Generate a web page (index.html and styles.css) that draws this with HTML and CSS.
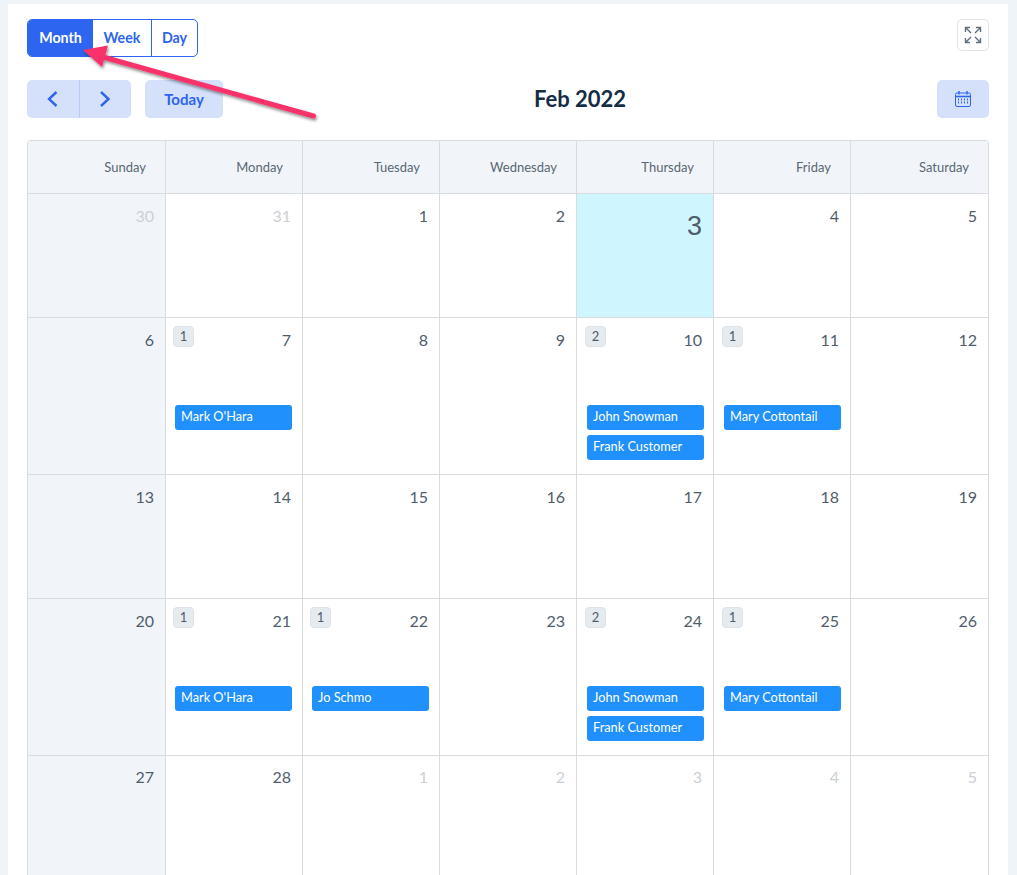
FILE: index.html
```html
<!DOCTYPE html>
<html>
    <head>
        <meta charset="utf-8">
        <title>Calendar</title>
        <link rel="stylesheet" href="styles.css">
    </head>
    <body>
        <div class="panel">
            <div class="top-row">
                <div class="views">
                    <div class="view active">Month</div>
                    <div class="view">Week</div>
                    <div class="view">Day</div>
                </div>
                <div class="expand">
                    <svg width="18" height="18" viewBox="0 0 18 18" fill="none" stroke="#5f6f7e" stroke-width="1.4">
                        <path d="M1.5 6V1.5H6M1.5 1.5L7 7"/>
                        <path d="M12 1.5h4.5V6M16.5 1.5L11 7"/>
                        <path d="M1.5 12v4.5H6M1.5 16.5L7 11"/>
                        <path d="M12 16.5h4.5V12M16.5 16.5L11 11"/>
                    </svg>
                </div>
            </div>
            <div class="nav-row">
                <div class="nav-left">
                    <div class="pager">
                        <div class="page-btn">
                            <svg width="12" height="18" viewBox="0 0 12 18" fill="none" stroke="#2d64f0" stroke-width="2.4"><path d="M9.5 2L2 9l7.5 7"/></svg>
                        </div>
                        <div class="page-btn">
                            <svg width="12" height="18" viewBox="0 0 12 18" fill="none" stroke="#2d64f0" stroke-width="2.4"><path d="M2 2l7.5 7L2 16"/></svg>
                        </div>
                    </div>
                    <div class="today">Today</div>
                </div>
                <div class="month-title">Feb 2022</div>
                <div class="pick">
                    <svg width="16" height="16" viewBox="0 0 16 16" fill="none" stroke="#2d64f0" stroke-width="1">
                        <rect x="0.5" y="2" width="15" height="13.5" rx="1.5"/>
                        <path d="M0.5 5.5h15" stroke-width="1.6"/>
                        <path d="M4 0v3.5M12 0v3.5" stroke-width="1.4"/>
                        <path d="M3.5 7.5v6M6.5 7.5v6M9.5 7.5v6M12.5 7.5v6" stroke-dasharray="2 1"/>
                    </svg>
                </div>
            </div>
            <div class="calendar">
                <div class="head">Sunday</div>
                <div class="head">Monday</div>
                <div class="head">Tuesday</div>
                <div class="head">Wednesday</div>
                <div class="head">Thursday</div>
                <div class="head">Friday</div>
                <div class="head">Saturday</div>

                <div class="day weekend short"><div class="num faded">30</div></div>
                <div class="day short"><div class="num faded">31</div></div>
                <div class="day short"><div class="num">1</div></div>
                <div class="day short"><div class="num">2</div></div>
                <div class="day short now"><div class="num big">3</div></div>
                <div class="day short"><div class="num">4</div></div>
                <div class="day short"><div class="num">5</div></div>

                <div class="day weekend tall"><div class="num">6</div></div>
                <div class="day tall">
                    <span class="count">1</span>
                    <div class="num">7</div>
                    <div class="events"><div class="event">Mark O'Hara</div></div>
                </div>
                <div class="day tall"><div class="num">8</div></div>
                <div class="day tall"><div class="num">9</div></div>
                <div class="day tall">
                    <span class="count">2</span>
                    <div class="num">10</div>
                    <div class="events">
                        <div class="event">John Snowman</div>
                        <div class="event">Frank Customer</div>
                    </div>
                </div>
                <div class="day tall">
                    <span class="count">1</span>
                    <div class="num">11</div>
                    <div class="events"><div class="event">Mary Cottontail</div></div>
                </div>
                <div class="day tall"><div class="num">12</div></div>

                <div class="day weekend short"><div class="num">13</div></div>
                <div class="day short"><div class="num">14</div></div>
                <div class="day short"><div class="num">15</div></div>
                <div class="day short"><div class="num">16</div></div>
                <div class="day short"><div class="num">17</div></div>
                <div class="day short"><div class="num">18</div></div>
                <div class="day short"><div class="num">19</div></div>

                <div class="day weekend tall"><div class="num">20</div></div>
                <div class="day tall">
                    <span class="count">1</span>
                    <div class="num">21</div>
                    <div class="events"><div class="event">Mark O'Hara</div></div>
                </div>
                <div class="day tall">
                    <span class="count">1</span>
                    <div class="num">22</div>
                    <div class="events"><div class="event">Jo Schmo</div></div>
                </div>
                <div class="day tall"><div class="num">23</div></div>
                <div class="day tall">
                    <span class="count">2</span>
                    <div class="num">24</div>
                    <div class="events">
                        <div class="event">John Snowman</div>
                        <div class="event">Frank Customer</div>
                    </div>
                </div>
                <div class="day tall">
                    <span class="count">1</span>
                    <div class="num">25</div>
                    <div class="events"><div class="event">Mary Cottontail</div></div>
                </div>
                <div class="day tall"><div class="num">26</div></div>

                <div class="day weekend tall last"><div class="num">27</div></div>
                <div class="day tall last"><div class="num">28</div></div>
                <div class="day tall last"><div class="num faded">1</div></div>
                <div class="day tall last"><div class="num faded">2</div></div>
                <div class="day tall last"><div class="num faded">3</div></div>
                <div class="day tall last"><div class="num faded">4</div></div>
                <div class="day tall last"><div class="num faded">5</div></div>
            </div>
        </div>
        <!-- annotation drawn over the screenshot -->
        <svg class="arrow" width="340" height="140" viewBox="0 0 340 140">
            <defs>
                <filter id="sombra" x="-10%" y="-20%" width="120%" height="150%">
                    <feDropShadow dx="1" dy="2" stdDeviation="1.5" flood-color="#000" flood-opacity="0.45"/>
                </filter>
            </defs>
            <g filter="url(#sombra)">
                <path d="M313.5 116L96 55" stroke="#f9326c" stroke-width="5" stroke-linecap="round" fill="none"/>
                <path d="M83 50L108 45.5L102 67Z" fill="#f9326c"/>
            </g>
        </svg>
    </body>
</html>
```

FILE: styles.css
```css
html, body{
    margin: 0;
    height: 875px;
    overflow: hidden;
}
body{
    background-color: #eff4f9;
    font-family: 'Lato', sans-serif;
    color: #4f5d6b;
    position: relative;
}
.panel{
    background-color: white;
    margin: 4px 9px 0 8px;
    padding: 15px 19px 0 19px;
    height: 871px;
    box-sizing: border-box;
}
.top-row{
    display: flex;
    justify-content: space-between;
    height: 38px;
}
.views{
    display: flex;
    height: 38px;
    box-sizing: border-box;
    border: 1px solid #2d64f0;
    border-radius: 5px;
    overflow: hidden;
}
.view{
    display: flex;
    align-items: center;
    justify-content: center;
    color: #2d64f0;
    font-size: 14.25px;
    font-weight: 700;
    padding-bottom: 1px;
    box-sizing: border-box;
    width: 58px;
    border-left: 1px solid #2d64f0;
}
.view:nth-child(2){
    border-left: none;
}
.view:nth-child(3){
    width: 46px;
}
.view.active{
    background-color: #2d64f0;
    color: white;
    width: 65px;
    border-left: none;
}
.expand{
    width: 32px;
    height: 32px;
    box-sizing: border-box;
    border: 1px solid #dfe3e8;
    border-radius: 5px;
    display: flex;
    align-items: center;
    justify-content: center;
}
.nav-row{
    display: flex;
    align-items: center;
    justify-content: space-between;
    margin-top: 23px;
    height: 38px;
}
.nav-left{
    display: flex;
    gap: 14px;
}
.pager{
    display: flex;
    width: 104px;
    height: 38px;
    background-color: #d5e1fb;
    border-radius: 5px;
}
.page-btn{
    flex: 1;
    display: flex;
    align-items: center;
    justify-content: center;
}
.page-btn + .page-btn{
    border-left: 1px solid #b7cbf7;
}
.today{
    width: 78px;
    height: 38px;
    padding-bottom: 1px;
    box-sizing: border-box;
    background-color: #d5e1fb;
    border-radius: 5px;
    color: #2d64f0;
    font-size: 15px;
    font-weight: 700;
    display: flex;
    align-items: center;
    justify-content: center;
}
.month-title{
    color: #152c45;
    font-size: 22px;
    font-weight: 700;
    margin-bottom: 1px;
}
.pick{
    width: 52px;
    height: 38px;
    background-color: #d5e1fb;
    border-radius: 5px;
    display: flex;
    align-items: center;
    justify-content: center;
}
.calendar{
    display: grid;
    grid-template-columns: 137px repeat(5, 137px) 138px;
    width: 962px;
    margin-top: 22px;
    box-sizing: border-box;
    border-top: 1px solid #d9dcdf;
    border-left: 1px solid #d9dcdf;
    border-right: 1px solid #d9dcdf;
    border-radius: 4px 4px 0 0;
}
.head{
    background-color: #f1f5f9;
    height: 52px;
    box-sizing: content-box;
    border-bottom: 1px solid #d9dcdf;
    border-left: 1px solid #d9dcdf;
    display: flex;
    align-items: center;
    justify-content: flex-end;
    padding-right: 19px;
    padding-bottom: 0;
    font-size: 13px;
    line-height: 50px;
    color: #5a6773;
}
.head:first-child{
    border-left: none;
}
.day{
    position: relative;
    box-sizing: border-box;
    border-bottom: 1px solid #d9dcdf;
    border-left: 1px solid #d9dcdf;
    padding: 12px 11px 0 0;
}
.day.weekend{
    background-color: #f1f5f9;
    border-left: none;
}
.day.last{
    padding-top: 11px;
}
.short{
    height: 124px;
}
.tall{
    height: 157px;
}
.now{
    background-color: #cff5ff;
}
.num{
    text-align: right;
    font-size: 16px;
    line-height: 20px;
    color: #4f5d6b;
}
.num.faded{
    color: #cbd0d5;
}
.num.big{
    font-family: 'Liberation Sans', sans-serif;
    font-size: 27px;
    line-height: 40px;
}
.count{
    position: absolute;
    left: 7px;
    top: 8px;
    width: 21px;
    height: 21px;
    box-sizing: border-box;
    background-color: #e6ebf0;
    border: 1px solid #dde3e9;
    border-radius: 4px;
    font-size: 13px;
    line-height: 18px;
    text-align: center;
}
.events{
    position: absolute;
    top: 87px;
    left: 9px;
    width: 117px;
    display: flex;
    flex-direction: column;
    gap: 5px;
}
/* thursday and friday sit a pixel further right */
.day:nth-child(7n+5) .events,
.day:nth-child(7n+6) .events{
    left: 10px;
}
.day:nth-child(7n+5) .count,
.day:nth-child(7n+6) .count{
    left: 8px;
}
.event{
    background-color: #2091fc;
    color: white;
    height: 25px;
    border-radius: 3px;
    font-size: 12.75px;
    line-height: 23px;
    padding-left: 6px;
}
.arrow{
    position: absolute;
    left: 0;
    top: 0;
}
```
